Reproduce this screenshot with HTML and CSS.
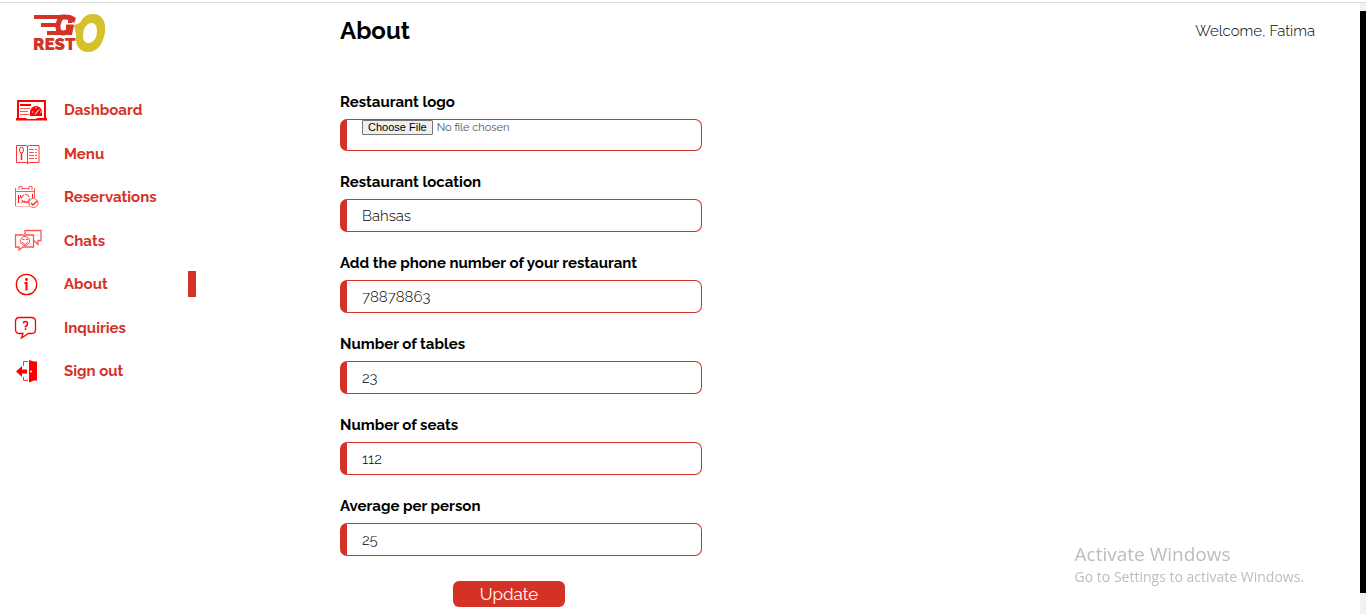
FILE: index.html
```html
<!DOCTYPE html>
<html lang="en">
<head>
<meta charset="utf-8">
<title>About - Go Resto</title>
<meta name="viewport" content="width=device-width, initial-scale=1">
<link rel="stylesheet" href="styles.css">
</head>
<body>
<div class="app">
  <aside class="sidebar">
    <a class="logo" href="#">
      <svg width="74" height="42" viewBox="0 0 74 42" role="img" aria-label="Go Resto">
        <path fill="#d53227" d="M1 3h35v4H1zM8 11h18v4H8zM14 19h14v4H14z"/>
        <path fill="none" stroke="#d53227" stroke-width="5" d="M39 10l1-3q-3-2-8-2h-3q-4 4-4 10 0 6 5 6 4 0 6-3l1-3h-4"/>
        <path fill="#d53227" d="M35 3l5 2-1 6h-4zM34 13h7l-2 10h-5z"/>
        <text class="logo-text" x="0" y="38">REST</text>
        <path fill="#d6c02c" fill-rule="evenodd" d="M60 2c9 0 13 7 12 18-2 13-8 20-17 20-9 0-13-7-12-17l-2-10 6-2C50 5 54 2 60 2zm-1 9c-6 0-9 6-9 13 0 4 2 7 5 7 6 0 9-6 9-12 0-5-2-8-5-8z"/>
      </svg>
    </a>
    <nav class="menu" aria-label="Main">
      <a class="menu-link" href="#">
        <svg class="icon" viewBox="0 0 32 24">
          <path fill="none" stroke="#f00" stroke-width="2" d="M3 20V3h27v17"/>
          <path fill="#f00" d="M1 20h10l1 1h9l1-1h10v2.500H1zM5 6h11v2H5zM15 18c-1-6 2-10 6-10s7 4 6 10z"/>
          <path stroke="#ff5a5a" d="M5 10.500h10M5 13.500h8M5 16.500h9"/>
          <path stroke="#fff" d="M20 16.500l4-5M17 14h1.500M21 9v1.500M25 14h1.500"/>
        </svg>Dashboard</a>
      <a class="menu-link" href="#">
        <svg class="icon" viewBox="0 0 32 24">
          <path fill="none" stroke="#f33" d="M1.500 3.500H11l1.500 1 1.500-1h10v17H14l-1.500 1-1.500-1H1.500zM12.500 4v18"/>
          <ellipse cx="6.500" cy="8" rx="2" ry="3" fill="none" stroke="#f22"/>
          <path stroke="#f22" stroke-width="1.500" d="M6.500 11v7"/>
          <path stroke="#f55" stroke-dasharray="5 1 2" d="M14 7.500h8M14 10.500h8M14 13.500h8M14 16.500h8"/>
        </svg>Menu</a>
      <a class="menu-link" href="#">
        <svg class="icon" viewBox="0 0 32 24">
          <path fill="none" stroke="#f55" d="M.5 21V3M19.500 13V3M0 6.500h20M4 5V1.500h3V5M14 5V1.500h3V5M7 3.500h7"/>
          <path stroke="#fbb" d="M1 21.500h14"/>
          <path fill="none" stroke="#f11" d="M3.500 10v8M5.500 10v2l-2 2M17.500 9v4"/>
          <circle cx="10.500" cy="13.500" r="4" fill="none" stroke="#f22" stroke-dasharray="5 1"/>
          <path fill="none" stroke="#f33" d="M6 18l3-2 5 2"/>
          <circle cx="18.500" cy="18" r="4.500" fill="#fff" stroke="#f55"/>
          <path fill="none" stroke="#f22" stroke-width="1.300" d="M16 18l2 2 4-4"/>
        </svg>Reservations</a>
      <a class="menu-link" href="#">
        <svg class="icon" viewBox="0 0 32 24">
          <path fill="none" stroke="#f55" stroke-width="1.300" d="M10 5V1.500h16v10h-3v4l-4-4M.5 6h18v12H8l-4 3v-3H.5z"/>
          <circle cx="10" cy="12" r="4.500" fill="none" stroke="#f44"/>
          <path fill="none" stroke="#f33" d="M7.500 13c1 3 4 3 5 0M7.500 10.500h2M11 10.500h2"/>
        </svg>Chats</a>
      <a class="menu-link active" href="#" aria-current="page">
        <svg class="icon" viewBox="0 0 32 24">
          <circle cx="11.500" cy="12.500" r="10.200" fill="none" stroke="#f00" stroke-width="1.300"/>
          <circle cx="11.500" cy="7.500" r="1.400" fill="#f00"/>
          <path fill="none" stroke="#f00" stroke-width="2" d="M9.500 11h2v7.500"/>
        </svg>About</a>
      <a class="menu-link" href="#">
        <svg class="icon" viewBox="0 0 32 24">
          <path fill="none" stroke="#f00" stroke-width="1.300" d="M4.500 1.500h12q4 0 4 4v8q0 4-4 4h-3L6.500 22l1.500-4.500H4.500q-4 0-4-4v-8q0-4 4-4z"/>
          <path fill="none" stroke="#f00" stroke-width="1.600" d="M8.500 7.500q0-2 2-2t2 2-2 3v1M10.500 12.300V14"/>
        </svg>Inquiries</a>
      <a class="menu-link" href="#">
        <svg class="icon" viewBox="0 0 32 24">
          <path fill="#f00" d="M14 1l5 1.500h3v19h-3L14 23.500zM1 12.500L7 7v3.500h5v4H7V18z"/>
          <path fill="none" stroke="#f33" d="M13 2.500H8.500V7M8.500 18v3.500H13"/>
          <circle cx="16" cy="12.500" r="1" fill="#fff"/>
        </svg>Sign out</a>
    </nav>
  </aside>
  <main class="main">
    <header class="topbar">
      <h1 class="title">About</h1>
      <p class="welcome">Welcome, Fatima</p>
    </header>
    <form class="form">
      <div class="field">
        <label class="label" for="logo">Restaurant logo</label>
        <input class="input file" id="logo" type="file">
      </div>
      <div class="field">
        <label class="label" for="location">Restaurant location</label>
        <input class="input" id="location" type="text" value="Bahsas">
      </div>
      <div class="field">
        <label class="label" for="phone">Add the phone number of your restaurant</label>
        <input class="input" id="phone" type="text" value="78878863">
      </div>
      <div class="field">
        <label class="label" for="tables">Number of tables</label>
        <input class="input" id="tables" type="text" value="23">
      </div>
      <div class="field">
        <label class="label" for="seats">Number of seats</label>
        <input class="input" id="seats" type="text" value="112">
      </div>
      <div class="field">
        <label class="label" for="average">Average per person</label>
        <input class="input" id="average" type="text" value="25">
      </div>
      <button class="update" type="button">Update</button>
    </form>
  </main>
  <div class="scroll"><div class="thumb"></div></div>
</div>
<div class="watermark">
  <p class="watermark-title">Activate Windows</p>
  <p class="watermark-text">Go to Settings to activate Windows.</p>
</div>
</body>
</html>
```
FILE: styles.css
```css
* { box-sizing: border-box; }

body {
  margin: 0;
  padding-top: 2px;
  background: #fff;
  color: #000;
  font-family: Raleway, Lato, "Open Sans", sans-serif;
  font-size: 15px;
}

h1, p { margin: 0; }

.app {
  display: flex;
  min-height: calc(100vh - 2px);
  border-top: 1px solid #dcdcdc;
}

.sidebar {
  width: 196px;
  flex: none;
}

.logo {
  display: block;
  height: 42px;
  margin: 9px 0 0 33px;
}

.logo svg { display: block; }

.logo-text {
  fill: #d53227;
  font-family: Raleway, Lato, sans-serif;
  font-size: 17px;
  font-weight: 900;
}

.menu {
  display: flex;
  flex-direction: column;
  justify-content: space-between;
  min-height: 287px;
  margin-top: 43px;
}

.menu-link {
  display: flex;
  align-items: center;
  gap: 17px;
  height: 26px;
  padding-left: 15px;
  color: #d53227;
  font-weight: 700;
  text-decoration: none;
}

.menu-link.active { border-right: 8px solid #d53227; }

.icon {
  width: 32px;
  height: 24px;
  flex: none;
  overflow: visible;
}

.main {
  flex: 1;
  padding: 13px 45px 7px 144px;
}

.topbar {
  display: flex;
  align-items: center;
  justify-content: space-between;
  height: 30px;
}

.title {
  font-size: 24px;
  line-height: 30px;
  font-weight: 700;
}

.welcome { font-weight: 300; }

.form {
  display: flex;
  flex-direction: column;
  gap: 21px;
  max-width: 362px;
  margin-top: 46px;
}

.field {
  display: flex;
  flex-direction: column;
  gap: 7px;
}

.label {
  line-height: 20px;
  font-weight: 700;
}

.input {
  width: 100%;
  height: 33px;
  padding: 0 15px;
  border: 1px solid #d53227;
  border-left-width: 7px;
  border-radius: 7px;
  background: #fff;
  color: #000;
  font-family: inherit;
  font-size: 15px;
  font-weight: 300;
}

.file {
  height: 32px;
  color: #555;
  font-size: 11px;
  font-weight: 400;
  line-height: 16px;
}

.file::file-selector-button {
  height: 15px;
  margin: 0 4px 0 0;
  padding: 0 5px;
  border: 1px solid #767676;
  border-radius: 1px;
  background: #efefef;
  color: #000;
  font: 11px/13px "Liberation Sans", Arial, sans-serif;
}

.update {
  width: 112px;
  height: 26px;
  align-self: center;
  margin: 4px 24px 0 0;
  padding: 0;
  border: 0;
  border-radius: 6px;
  background: #d53227;
  color: #fff;
  font-family: inherit;
  font-size: 17px;
}

.scroll {
  display: flex;
  width: 6px;
  flex: none;
  padding: 8px 0 21px;
  background: #f1f1f1;
}

.thumb {
  flex: 1;
  background: #000;
}

.watermark {
  position: fixed;
  right: 62px;
  bottom: 27px;
  color: #bdbdbd;
  font-family: "Segoe UI", "Open Sans", sans-serif;
}

.watermark-title {
  font-size: 19px;
  line-height: 26px;
}

.watermark-text {
  font-size: 14px;
  line-height: 20px;
}
```
